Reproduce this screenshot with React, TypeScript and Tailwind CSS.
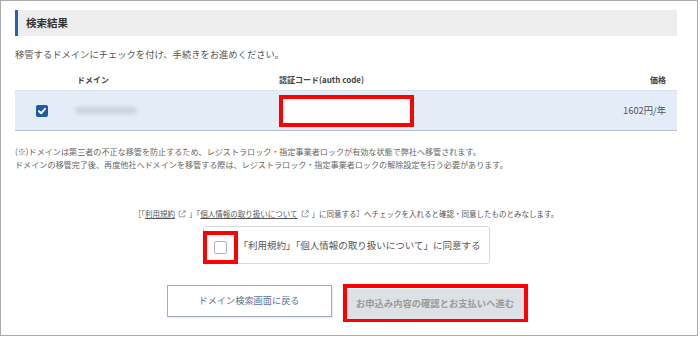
import React from "react";

const font = { fontFamily: '"Noto Sans CJK JP", "Noto Sans", sans-serif' };

const ExtIcon = () => (
  <svg width="8" height="8" viewBox="0 0 10 10" className="inline-block mx-[3px] align-[-1px]" fill="none" stroke="#888" strokeWidth="1">
    <path d="M4 1.5H1.5v7h7V6" />
    <path d="M6 1h3v3M9 1 4.5 5.5" />
  </svg>
);

const CheckedBox = () => (
  <span className="flex h-[12px] w-[12px] items-center justify-center rounded-[2px] bg-[#1d5aa5]">
    <svg width="10" height="10" viewBox="0 0 10 10" fill="none" stroke="#fff" strokeWidth="2" strokeLinecap="round" strokeLinejoin="round">
      <path d="M2 5.3 4.1 7.3 8 2.8" />
    </svg>
  </span>
);

export default function App() {
  return (
    <div className="h-[337px] w-[700px] bg-white" style={font}>
      <div className="flex h-[336px] w-[698px] flex-col border border-[#ababab] pl-[14px] pr-[20px] text-[#444]">
        <div className="mt-[9px] flex h-[26px] items-center border-l-[3px] border-[#2760ab] bg-[#ededed] pl-[8px] text-[10.5px] font-bold text-[#333]">
          検索結果
        </div>

        <p className="mt-[11px] text-[9.3px] leading-[14px] text-[#555]">
          移管するドメインにチェックを付け、手続きをお進めください。
        </p>

        <div className="mt-[13px] grid grid-cols-[60px_204px_1fr_auto] pr-[11px] text-[8px] font-bold leading-[12px] text-[#444]">
          <span />
          <span className="pl-[2px]">ドメイン</span>
          <span>認証コード(auth code)</span>
          <span>価格</span>
        </div>

        <div className="mt-[4px] grid h-[41px] grid-cols-[60px_204px_1fr_auto] items-center border-t border-b border-t-[#d5e0ec] border-b-[#b3c0cf] bg-[#e4edf7] pr-[11px]">
          <span className="pl-[21px]">
            <CheckedBox />
          </span>
          <span className="block h-[7px] w-[62px] rounded-full bg-[#ccd2da] blur-[2px]" />
          <span className="block h-[32px] w-[135px] border-[4px] border-[#ff0000] bg-white" />
          <span className="text-[9.3px] text-[#555]">1602円/年</span>
        </div>

        <div className="mt-[14px] text-[8.1px] leading-[13px] text-[#666]">
          <p>(※)ドメインは第三者の不正な移管を防止するため、レジストラロック・指定事業者ロックが有効な状態で弊社へ移管されます。</p>
          <p>ドメインの移管完了後、再度他社へドメインを移管する際は、レジストラロック・指定事業者ロックの解除設定を行う必要があります。</p>
        </div>

        <p className="mt-[37px] text-center text-[7.5px] leading-[12px] text-[#555]">
          ［「<span className="underline">利用規約</span>
          <ExtIcon />」「<span className="underline">個人情報の取り扱いについて</span>
          <ExtIcon />」に同意する］へチェックを入れると確認・同意したものとみなします。
        </p>

        <div className="mx-auto mt-[6px] flex h-[38px] w-[287px] items-center rounded-[3px] border border-[#d6dbe2]">
          <span className="-ml-[1px] mt-[4px] flex h-[33px] w-[35px] items-center justify-center border-[4px] border-[#ff0000] bg-white">
            <span className="block h-[13px] w-[13px] rounded-[2px] border border-[#a9b5c5] bg-white" />
          </span>
          <span className="ml-[1px] text-[9.5px] text-[#555]">「利用規約」「個人情報の取り扱いについて」に同意する</span>
        </div>

        <div className="mt-[20px] flex items-start justify-center gap-[11px] pl-[2px]">
          <button className="mt-[1px] h-[32px] w-[165px] border border-[#9eabc1] bg-white text-[9.2px] text-[#5a7194] shadow-[1px_1px_1px_rgba(0,0,0,0.08)]">
            ドメイン検索画面に戻る
          </button>
          <div className="h-[38px] w-[185px] border-[4px] border-[#ff0000]">
            <button className="h-[30px] w-full bg-[#dde0e4] text-[9.3px] font-bold text-[#9a9a9a]">
              お申込み内容の確認とお支払いへ進む
            </button>
          </div>
        </div>
      </div>
    </div>
  );
}
